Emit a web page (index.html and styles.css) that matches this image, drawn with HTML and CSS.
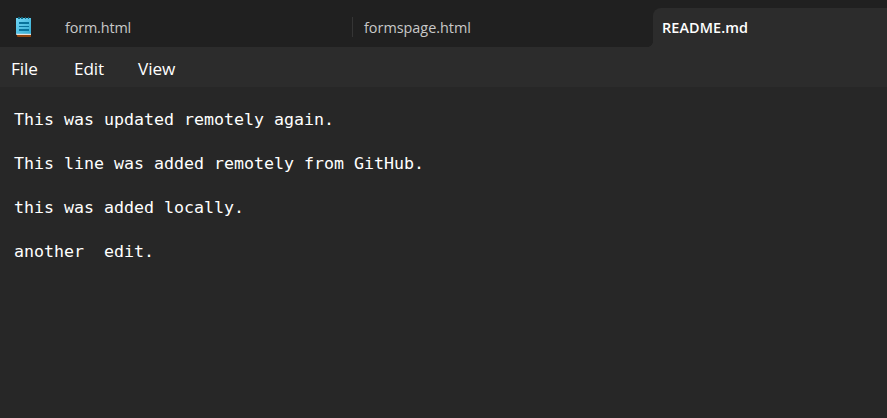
FILE: index.html
```html
<!DOCTYPE html>
<html lang="en">
<head>
<meta charset="utf-8">
<title>README.md - Notepad</title>
<link rel="stylesheet" href="styles.css">
</head>
<body>
<header class="titlebar">
  <svg class="app-icon" width="16" height="20" viewBox="0 0 16 20" aria-hidden="true">
    <defs><linearGradient id="paper" x2="1" y2="1"><stop stop-color="#70d5f5"/><stop offset="1" stop-color="#36add3"/></linearGradient></defs>
    <path fill="#b85308" d="M1 17h14v2.8H2q-1 0-1-1z"/>
    <path fill="#753b17" d="M1 17.6h14v1H1z"/>
    <path fill="#e9e4df" d="M0 16h15v2H1q-1 0-1-1z"/>
    <path fill="url(#paper)" d="M0 1h15v15.8H0z"/>
    <path fill="#126780" d="M2 0h2v2H2zM5 0h2v2H5zM9 0h1v2H9zM12 0h1v2h-1z"/>
    <path fill="#08739c" d="M3 5h10v2H3zM3 9h10v1H3zM3 12h10v2H3z"/>
  </svg>
  <nav class="tabs">
    <div class="tab tab-form"><span class="form-name">form.html</span></div>
    <div class="tab tab-page"><span class="page-name">formspage.html</span></div>
    <div class="tab active"><span class="readme-name">README.md</span></div>
  </nav>
</header>
<nav class="menu"><span class="file">File</span><span class="edit">Edit</span><span class="view">View</span></nav>
<main class="editor">This was updated remotely again.

This line was added remotely from GitHub.

this was added locally.

another  edit.</main>
</body>
</html>
```
FILE: styles.css
```css
* { box-sizing: border-box; }
body {
  margin: 0;
  height: 418px;
  display: flex;
  flex-direction: column;
  overflow: hidden;
  background: #272727;
  color: #fff;
  font-family: "Open Sans", "Noto Sans", sans-serif;
}
.titlebar {
  height: 47px;
  flex: none;
  display: flex;
  background: #202020;
}
.app-icon { flex: none; margin: 17px 14px 0 16px; }
.tabs { flex: 1; display: flex; padding-top: 8px; }
.tab {
  position: relative;
  height: 39px;
  font-size: 14.4px;
  line-height: 39px;
  white-space: nowrap;
  color: #c8c8c8;
}
.tab-form { width: 307px; padding-left: 19px; letter-spacing: -0.15px; }
.tab-page { width: 300px; padding-left: 11px; }
.tab-page::before {
  content: "";
  position: absolute;
  left: -1px;
  top: 9px;
  width: 1px;
  height: 20px;
  background: #353535;
}
.active {
  flex: 1;
  padding-left: 9px;
  background: #2c2c2c;
  border-radius: 8px 0 0 0;
  color: #fff;
  font-weight: 600;
  letter-spacing: 0.1px;
}
.active::before {
  content: "";
  position: absolute;
  left: -5px;
  bottom: 0;
  width: 5px;
  height: 5px;
  background: radial-gradient(circle at 0 0, #202020 4.5px, #2c2c2c 5px);
}
.menu {
  height: 40px;
  flex: none;
  display: flex;
  background: #2c2c2c;
  font-size: 17.2px;
  letter-spacing: -0.1px;
  line-height: 43px;
}
.file { width: 63px; margin-left: 11px; }
.edit { width: 64px; }
.editor {
  flex: 1;
  padding: 22px 14px;
  white-space: pre;
  font-family: "DejaVu Sans Mono", monospace;
  font-size: 16.61px;
  line-height: 22px;
}
```
